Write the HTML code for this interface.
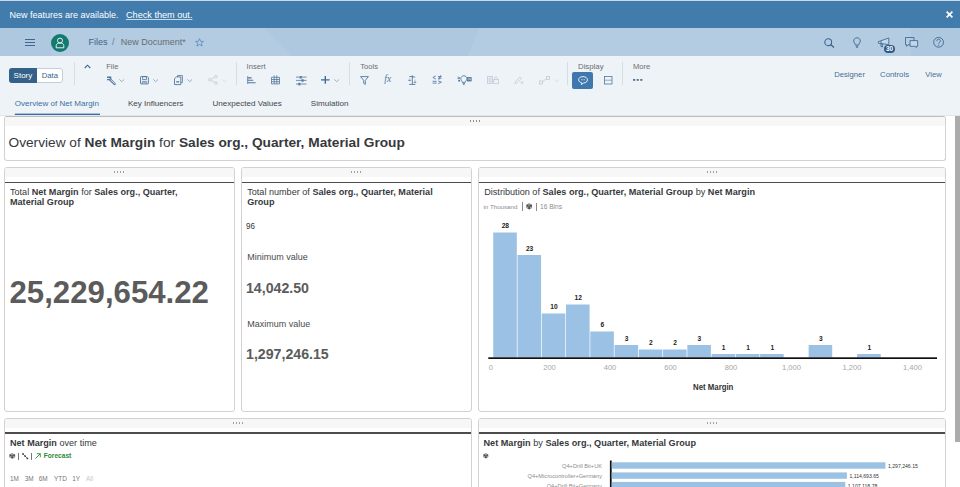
<!DOCTYPE html>
<html><head><meta charset="utf-8">
<style>
*{margin:0;padding:0;box-sizing:border-box}
html,body{width:960px;height:487px;overflow:hidden;background:#fff;font-family:"Liberation Sans",sans-serif;color:#32363a}
.a{position:absolute;white-space:nowrap;line-height:1}
svg.a{overflow:visible}
.card{position:absolute;background:#fff;border:1px solid #d2d2d2;border-radius:3px;overflow:hidden}
.hd{position:absolute;left:0;right:0;top:0;height:9px;background:#f7f7f7}
.ln{position:absolute;left:0;right:0;top:13.3px;height:1.5px;background:#4c4c4c}
.dt{position:absolute;top:2.8px;left:50%;margin-left:-5.5px;width:11px;height:2px;background-image:linear-gradient(90deg,#a0a0a0 1.4px,transparent 1.4px);background-size:3px 2px}
b{font-weight:bold}
</style></head><body>
<div class="a" style="left:0px;top:0px;width:960px;height:28px;background:#417cad;"></div>
<div class="a" style="left:0px;top:0px;width:960px;height:1px;background:#c9d9e7;"></div>
<div class="a" style="left:9.50px;top:10.68px;font-size:9px;color:#fff;font-weight:400;">New features are available.</div>
<div class="a" style="left:126.00px;top:10.55px;font-size:9.15px;color:#fff;font-weight:400;text-decoration:underline;text-decoration-color:rgba(255,255,255,0.7)">Check them out.</div>
<svg class="a" style="left:946px;top:11.2px" width="7" height="7" viewBox="0 0 7 7"><path d="M0.6 0.6L6.4 6.4M6.4 0.6L0.6 6.4" stroke="#fff" stroke-width="1.6"/></svg>
<div class="a" style="left:0px;top:28px;width:960px;height:28px;background:#b3cce2;"></div>
<div class="a" style="left:0px;top:28px;width:51px;height:28px;background:#aec8df;"></div>
<div class="a" style="left:911px;top:28px;width:49px;height:28px;background:#aec8df;"></div>
<svg class="a" style="left:0;top:28px" width="960" height="28"><path d="M263.8 0H479.5L467.6 28H292Z" fill="#aec8df"/></svg>
<div class="a" style="left:24.6px;top:38.5px;width:10.4px;height:1.3px;background:#3f6591;"></div>
<div class="a" style="left:24.6px;top:41.7px;width:10.4px;height:1.3px;background:#3f6591;"></div>
<div class="a" style="left:24.6px;top:44.9px;width:10.4px;height:1.3px;background:#3f6591;"></div>
<div class="a" style="left:51px;top:33.7px;width:18.3px;height:18.3px;border-radius:50%;background:#147a70"></div>
<svg class="a" style="left:55px;top:36px" width="10" height="13" viewBox="0 0 10 13"><circle cx="5" cy="4.6" r="2.5" fill="none" stroke="#e9f2f1" stroke-width="1"/><path d="M1.2 11.8V9.6C1.2 8 2.6 7 5 7S8.8 8 8.8 9.6V11.8Z" fill="none" stroke="#e9f2f1" stroke-width="1"/></svg>
<div class="a" style="left:88.50px;top:37.58px;font-size:9px;color:#40618a;font-weight:400;">Files</div>
<div class="a" style="left:112.00px;top:37.58px;font-size:9px;color:#6a7b8c;font-weight:400;">/</div>
<div class="a" style="left:120.80px;top:37.58px;font-size:9px;color:#676b70;font-weight:400;">New Document*</div>
<svg class="a" style="left:194.5px;top:38.2px" width="9" height="9" viewBox="0 0 9 9"><path d="M4.5 0.6L5.6 3.3L8.5 3.4L6.3 5.2L7.1 8.1L4.5 6.5L1.9 8.1L2.7 5.2L0.5 3.4L3.4 3.3Z" fill="none" stroke="#5b86b5" stroke-width="0.8"/></svg>
<svg class="a" style="left:824px;top:38px" width="11" height="10" viewBox="0 0 11 10"><circle cx="4.2" cy="4.2" r="3.4" fill="none" stroke="#3f6591" stroke-width="1.1"/><path d="M6.6 6.6L10 9.6" stroke="#3f6591" stroke-width="1.4"/></svg>
<svg class="a" style="left:853px;top:37px" width="8" height="11" viewBox="0 0 8 11"><path d="M4 0.8C1.9 0.8 0.7 2.3 0.7 4C0.7 5.6 2.2 6.6 2.5 8H5.5C5.8 6.6 7.3 5.6 7.3 4C7.3 2.3 6.1 0.8 4 0.8Z" fill="none" stroke="#3f6591" stroke-width="0.9"/><path d="M2.7 9.2H5.3M3.2 10.4H4.8" stroke="#3f6591" stroke-width="0.9"/></svg>
<svg class="a" style="left:877px;top:37px" width="13" height="11" viewBox="0 0 13 11"><path d="M1.4 4.6L11.8 1V7.6L1.4 6.2Z" fill="#c3d6e8" stroke="#3f6591" stroke-width="0.85" stroke-linejoin="round"/><path d="M4 4V9.6L5.6 9.8L5.2 6.8" fill="none" stroke="#3f6591" stroke-width="0.85"/></svg>
<div class="a" style="left:884.2px;top:44.7px;width:11.2px;height:8px;border-radius:4px;background:#2f5a85"></div>
<div class="a" style="left:885.90px;top:45.80px;font-size:6.5px;color:#fff;font-weight:700;">30</div>
<svg class="a" style="left:905px;top:37px" width="13" height="11" viewBox="0 0 13 11"><path d="M0.5 0.5H9V7.8H3L1.6 9.3V7.8H0.5Z" fill="none" stroke="#3f6591" stroke-width="0.85"/><path d="M5 3.6H12.6V9.3H11.4V10.5L10 9.3H5Z" fill="#c3d6e8" stroke="#3f6591" stroke-width="0.85"/></svg>
<svg class="a" style="left:933px;top:37px" width="12" height="11" viewBox="0 0 12 11"><circle cx="5.6" cy="5.3" r="4.9" fill="none" stroke="#3f6591" stroke-width="0.9"/><path d="M3.8 4C3.8 2.9 4.6 2.3 5.6 2.3C6.6 2.3 7.4 2.9 7.4 3.9C7.4 5.2 5.7 5.3 5.7 6.6" fill="none" stroke="#3f6591" stroke-width="0.9"/><circle cx="5.7" cy="8.2" r="0.6" fill="#3f6591"/></svg>
<div class="a" style="left:0px;top:56px;width:960px;height:60px;background:#eef3f8;"></div>
<div class="a" style="left:9px;top:67.5px;width:53.5px;height:15px;border:1px solid #c5ced8;border-radius:3px;background:#fff"></div>
<div class="a" style="left:9px;top:67.5px;width:27.8px;height:15px;border-radius:3px 0 0 3px;background:#33618a"></div>
<div class="a" style="left:13.60px;top:71.53px;font-size:8.0px;color:#fff;font-weight:400;">Story</div>
<div class="a" style="left:41.70px;top:71.78px;font-size:7.7px;color:#33618a;font-weight:400;">Data</div>
<div class="a" style="left:74.0px;top:62px;width:1px;height:22.5px;background:#d5dde5;"></div>
<div class="a" style="left:236.0px;top:62px;width:1px;height:22.5px;background:#d5dde5;"></div>
<div class="a" style="left:349.0px;top:62px;width:1px;height:22.5px;background:#d5dde5;"></div>
<div class="a" style="left:567.0px;top:62px;width:1px;height:22.5px;background:#d5dde5;"></div>
<div class="a" style="left:622.0px;top:62px;width:1px;height:22.5px;background:#d5dde5;"></div>
<svg class="a" style="left:83.5px;top:63.5px" width="7" height="5" viewBox="0 0 7 5"><path d="M0.7 4L3.5 1.2L6.3 4" fill="none" stroke="#3d6998" stroke-width="1.1"/></svg>
<div class="a" style="left:106.20px;top:63.17px;font-size:7.6px;color:#6a6d70;font-weight:400;">File</div>
<div class="a" style="left:246.60px;top:63.17px;font-size:7.6px;color:#6a6d70;font-weight:400;">Insert</div>
<div class="a" style="left:360.30px;top:63.17px;font-size:7.6px;color:#6a6d70;font-weight:400;">Tools</div>
<div class="a" style="left:578.00px;top:63.00px;font-size:7.8px;color:#6a6d70;font-weight:400;">Display</div>
<div class="a" style="left:632.90px;top:63.17px;font-size:7.6px;color:#6a6d70;font-weight:400;">More</div>
<svg class="a" style="left:104px;top:73px" width="16" height="14" viewBox="0 0 16 14"><path d="M3 4.2H6.6V6.6H3" fill="none" stroke="#52769d" stroke-width="1.4"/><path d="M6.2 6.6L10.6 11" stroke="#52769d" stroke-width="2.4" stroke-linecap="round"/><path d="M6.6 6.8L10.4 10.6" stroke="#eef3f8" stroke-width="0.9" stroke-linecap="round"/></svg>
<svg class="a" style="left:119.3px;top:78.5px" width="5.5" height="3.2" viewBox="0 0 5.5 3.2"><path d="M0.4 0.4L2.75 2.7L5.1 0.4" fill="none" stroke="#8ea4ba" stroke-width="0.9"/></svg>
<svg class="a" style="left:140px;top:75.6px" width="9" height="8.4" viewBox="0 0 9 8.4"><path d="M1.2 0.5H7.2L8.4 1.7V7.4Q8.4 7.9 7.9 7.9H1Q0.5 7.9 0.5 7.4V1.2Q0.5 0.5 1.2 0.5Z" fill="none" stroke="#52769d" stroke-width="0.9"/><rect x="2.6" y="0.8" width="4" height="2.6" fill="none" stroke="#52769d" stroke-width="0.8"/><path d="M2.3 7.8V5.4H6.6V7.8M3.3 6.6H5.6" fill="none" stroke="#52769d" stroke-width="0.7"/></svg>
<svg class="a" style="left:153px;top:78.5px" width="5.5" height="3.2" viewBox="0 0 5.5 3.2"><path d="M0.4 0.4L2.75 2.7L5.1 0.4" fill="none" stroke="#8ea4ba" stroke-width="0.9"/></svg>
<svg class="a" style="left:174px;top:75px" width="9" height="10" viewBox="0 0 9 10"><path d="M3.6 1.9V0.5H8.4V7.6H6.9" fill="none" stroke="#52769d" stroke-width="0.8"/><path d="M0.5 3.6L2.4 1.9H6.8V9.6H0.5Z" fill="none" stroke="#52769d" stroke-width="0.9"/><rect x="2.2" y="6.2" width="3" height="1.3" fill="#52769d"/></svg>
<svg class="a" style="left:187px;top:78.5px" width="5.5" height="3.2" viewBox="0 0 5.5 3.2"><path d="M0.4 0.4L2.75 2.7L5.1 0.4" fill="none" stroke="#8ea4ba" stroke-width="0.9"/></svg>
<svg class="a" style="left:208px;top:75.3px" width="10" height="10" viewBox="0 0 10 10"><circle cx="1.8" cy="4.8" r="1.3" fill="none" stroke="#c4d0dc" stroke-width="0.9"/><circle cx="8" cy="1.6" r="1.3" fill="none" stroke="#c4d0dc" stroke-width="0.9"/><circle cx="8" cy="8" r="1.3" fill="none" stroke="#c4d0dc" stroke-width="0.9"/><path d="M3 4.2L6.8 2.2M3 5.4L6.8 7.4" stroke="#c4d0dc" stroke-width="0.9"/></svg>
<svg class="a" style="left:222.4px;top:78.5px" width="5.5" height="3.2" viewBox="0 0 5.5 3.2"><path d="M0.4 0.4L2.75 2.7L5.1 0.4" fill="none" stroke="#d5dde5" stroke-width="0.9"/></svg>
<svg class="a" style="left:246.5px;top:75.8px" width="9" height="8.2" viewBox="0 0 9 8.2"><path d="M0.7 0.2V7.9" stroke="#52769d" stroke-width="0.9"/><path d="M1 1.9H4.6M1 4.3H6.2M1 6.7H8.6" stroke="#52769d" stroke-width="1.1"/></svg>
<svg class="a" style="left:271px;top:75.3px" width="9" height="9.4" viewBox="0 0 9 9.4"><path d="M0.5 2.3H8.5V8.9H0.5Z M0.5 4.5H8.5M0.5 6.7H8.5M3.2 0.4V8.9M5.8 0.4V8.9" fill="none" stroke="#52769d" stroke-width="0.8"/></svg>
<svg class="a" style="left:295.5px;top:75.5px" width="10.5" height="9.5" viewBox="0 0 10.5 9.5"><path d="M0 1.1H10.5M0 4.4H10.5M0 8H10.5" stroke="#52769d" stroke-width="0.8"/><rect x="3.8" y="0" width="1.9" height="2.6" fill="#52769d"/><rect x="5.6" y="3.2" width="1.9" height="2.6" fill="#52769d"/><rect x="2.4" y="6.8" width="1.9" height="2.6" fill="#52769d"/></svg>
<svg class="a" style="left:321.1px;top:76px" width="8.6" height="7.8" viewBox="0 0 8.6 7.8"><path d="M4.3 0V7.8M0 3.9H8.6" stroke="#3d6998" stroke-width="1.35"/></svg>
<svg class="a" style="left:334.1px;top:78.5px" width="5.5" height="3.2" viewBox="0 0 5.5 3.2"><path d="M0.4 0.4L2.75 2.7L5.1 0.4" fill="none" stroke="#8ea4ba" stroke-width="0.9"/></svg>
<svg class="a" style="left:360px;top:75.6px" width="9" height="9" viewBox="0 0 9 9"><path d="M0.6 0.6H8.4L5.3 4.4V8.4L3.7 7.3V4.4Z" fill="none" stroke="#52769d" stroke-width="0.9"/></svg>
<div class="a" style="left:384.30px;top:75.26px;font-size:9.5px;color:#52769d;font-weight:400;font-family:'Liberation Serif',serif"><i>fx</i></div>
<svg class="a" style="left:408px;top:75px" width="9" height="10" viewBox="0 0 9 10"><path d="M4.3 0.3V9.4M1.2 9.4H7.4M1.4 1.4L7.2 2.1" stroke="#52769d" stroke-width="0.9"/><path d="M0.3 5.4L1.6 1.6L2.9 5.4Z M5.7 7.3L7 3.2L8.3 7.3Z" fill="#c9d6e3" stroke="none"/><path d="M0.4 5.4H2.8M5.8 7.3H8.2" stroke="#52769d" stroke-width="0.9"/></svg>
<svg class="a" style="left:432px;top:75.3px" width="10.5" height="9" viewBox="0 0 10.5 9"><path d="M3.8 0.9L0.9 2.5L3.8 4.1M0.6 6.3H4.6M0.6 8.1H4.6M6 1.6H9.6M6 3.2H9.6M8.8 0.2L6.8 4.8M6.2 5.9L9.4 7.2L6.2 8.6" fill="none" stroke="#52769d" stroke-width="0.85"/></svg>
<svg class="a" style="left:457.3px;top:75px" width="15" height="10" viewBox="0 0 15 10"><path d="M6.8 0.8C5 0.8 3.8 2.1 3.8 3.7C3.8 5.2 5.2 6 5.4 7.4H8.2C8.4 6 9.8 5.2 9.8 3.7C9.8 2.1 8.6 0.8 6.8 0.8Z" fill="none" stroke="#52769d" stroke-width="0.9"/><path d="M5.6 8.6H8M6 9.6H7.6" stroke="#52769d" stroke-width="0.8"/><path d="M0.4 3.6H3M0.6 2L3 2.8" stroke="#52769d" stroke-width="0.8"/><rect x="10" y="2" width="4.6" height="4.4" fill="#52769d"/><path d="M10.6 3.2H14M10.6 4.6H14" stroke="#eef3f8" stroke-width="0.5"/><circle cx="2.2" cy="5.8" r="1" fill="#52769d"/></svg>
<svg class="a" style="left:487px;top:76px" width="12" height="8" viewBox="0 0 12 8"><rect x="0.5" y="0.5" width="5" height="7" fill="none" stroke="#c4d0dc" stroke-width="0.9"/><path d="M0.5 3H5.5M0.5 5.2H5.5M3 0.5V7.5" stroke="#c4d0dc" stroke-width="0.8"/><rect x="6.6" y="3.6" width="4.8" height="4" fill="none" stroke="#c4d0dc" stroke-width="0.9"/><path d="M7.6 3.6V2.2C7.6 0.6 10.4 0.6 10.4 2.2V3.6" fill="none" stroke="#c4d0dc" stroke-width="0.9"/></svg>
<svg class="a" style="left:514px;top:76px" width="10" height="8.5" viewBox="0 0 10 8.5"><path d="M0.8 7.6L1.2 5.8L6 1L7.4 2.4L2.6 7.2Z" fill="none" stroke="#c4d0dc" stroke-width="0.9"/><path d="M6.6 5.2L9.4 8M9.4 5.2L6.6 8" stroke="#c4d0dc" stroke-width="0.9"/></svg>
<svg class="a" style="left:539px;top:76.3px" width="11" height="8.5" viewBox="0 0 11 8.5"><rect x="0.5" y="5" width="3" height="3" fill="none" stroke="#c4d0dc" stroke-width="0.9"/><rect x="7.5" y="0.5" width="3" height="3" fill="none" stroke="#c4d0dc" stroke-width="0.9"/><path d="M3.5 5.8L7.5 2.5" stroke="#c4d0dc" stroke-width="0.9"/></svg>
<svg class="a" style="left:554.4px;top:78.5px" width="5.5" height="3.2" viewBox="0 0 5.5 3.2"><path d="M0.4 0.4L2.75 2.7L5.1 0.4" fill="none" stroke="#d5dde5" stroke-width="0.9"/></svg>
<div class="a" style="left:572.3px;top:71.5px;width:21.2px;height:17.2px;border-radius:2px;background:#3f78ad"></div>
<svg class="a" style="left:578px;top:75.5px" width="10" height="9.2" viewBox="0 0 10 9.2"><path d="M5 0.6C2.5 0.6 0.6 2 0.6 3.8C0.6 5.3 2 6.5 3.8 6.9L3.4 8.6L5.6 7C8 7 9.4 5.6 9.4 3.8C9.4 2 7.5 0.6 5 0.6Z" fill="none" stroke="#fff" stroke-width="0.9"/><path d="M3.2 3.8H6.8" stroke="#fff" stroke-width="0.8" stroke-dasharray="0.9 0.5"/></svg>
<svg class="a" style="left:603.7px;top:76px" width="8.5" height="8.5" viewBox="0 0 8.5 8.5"><rect x="0.5" y="0.5" width="7.5" height="7.5" fill="none" stroke="#52769d" stroke-width="0.8"/><path d="M0.5 4.2H8" stroke="#52769d" stroke-width="0.6"/></svg>
<svg class="a" style="left:633px;top:79.2px" width="10" height="2" viewBox="0 0 10 2"><rect x="0" y="0" width="2.2" height="1.8" fill="#52769d"/><rect x="3.6" y="0" width="2.2" height="1.8" fill="#52769d"/><rect x="7.2" y="0" width="2.2" height="1.8" fill="#52769d"/></svg>
<div class="a" style="left:834.20px;top:71.08px;font-size:7.7px;color:#4a6d93;font-weight:400;">Designer</div>
<div class="a" style="left:880.00px;top:71.00px;font-size:7.8px;color:#4a6d93;font-weight:400;">Controls</div>
<div class="a" style="left:925.30px;top:71.17px;font-size:7.6px;color:#4a6d93;font-weight:400;">View</div>
<div class="a" style="left:14.80px;top:99.89px;font-size:8.05px;color:#3b6fa3;font-weight:400;">Overview of Net Margin</div>
<div class="a" style="left:127.90px;top:99.89px;font-size:8.05px;color:#43464a;font-weight:400;">Key Influencers</div>
<div class="a" style="left:212.50px;top:99.89px;font-size:8.05px;color:#43464a;font-weight:400;">Unexpected Values</div>
<div class="a" style="left:310.80px;top:99.89px;font-size:8.05px;color:#43464a;font-weight:400;">Simulation</div>
<svg class="a" style="left:0;top:0" width="960" height="487"><rect x="14.8" y="113.6" width="85.2" height="1.5" fill="#3b72aa"/></svg>
<div class="a" style="left:0px;top:115px;width:960px;height:1px;background:#e1e6eb;"></div>
<div class="card" style="left:4px;top:116px;width:942px;height:45px;border-top:1.4px solid #bdbdbd"><div class="hd" style="height:8.7px"><div class="dt" style="top:2.6px;background-image:linear-gradient(90deg,#8f8f8f 1.4px,transparent 1.4px)"></div></div></div>
<div class="card" style="left:4px;top:167.3px;width:231px;height:244.4px"><div class="hd"><div class="dt"></div></div><div class="ln"></div></div>
<div class="card" style="left:241px;top:167.3px;width:231px;height:244.4px"><div class="hd"><div class="dt"></div></div><div class="ln"></div></div>
<div class="card" style="left:478px;top:167.3px;width:468px;height:244.4px"><div class="hd"><div class="dt"></div></div><div class="ln"></div></div>
<div class="card" style="left:4px;top:418px;width:468px;height:80px"><div class="hd"><div class="dt"></div></div><div class="ln"></div></div>
<div class="card" style="left:478px;top:418px;width:468px;height:80px"><div class="hd"><div class="dt"></div></div><div class="ln"></div></div>
<div class="a" style="left:8.50px;top:136.00px;font-size:13.7px;color:#36393c;font-weight:400;">Overview of <b>Net Margin</b> for <b>Sales org., Quarter, Material Group</b></div>
<div class="a" style="left:10.00px;top:187.51px;font-size:9.08px;color:#36393c;font-weight:400;">Total <b>Net Margin</b> for <b>Sales org., Quarter,</b></div>
<div class="a" style="left:10.00px;top:197.91px;font-size:9.08px;color:#36393c;font-weight:400;"><b>Material Group</b></div>
<div class="a" style="left:9.50px;top:276.59px;font-size:31.2px;color:#5b5b5b;font-weight:700;">25,229,654.22</div>
<div class="a" style="left:247.20px;top:187.50px;font-size:9.1px;color:#36393c;font-weight:400;">Total number of <b>Sales org., Quarter, Material</b></div>
<div class="a" style="left:247.20px;top:197.90px;font-size:9.1px;color:#36393c;font-weight:400;"><b>Group</b></div>
<div class="a" style="left:245.80px;top:221.62px;font-size:8.6px;color:#333;font-weight:400;transform:scaleX(0.93);transform-origin:0 0">96</div>
<div class="a" style="left:247.20px;top:253.38px;font-size:9px;color:#4a4a4a;font-weight:400;">Minimum value</div>
<div class="a" style="left:246.00px;top:280.61px;font-size:14.16px;color:#5b5b5b;font-weight:700;">14,042.50</div>
<div class="a" style="left:247.20px;top:320.28px;font-size:9px;color:#4a4a4a;font-weight:400;">Maximum value</div>
<div class="a" style="left:246.00px;top:347.30px;font-size:14.18px;color:#5b5b5b;font-weight:700;">1,297,246.15</div>
<div class="a" style="left:484.20px;top:188.47px;font-size:9.13px;color:#36393c;font-weight:400;">Distribution of <b>Sales org., Quarter, Material Group</b> by <b>Net Margin</b></div>
<div class="a" style="left:483.50px;top:204.25px;font-size:6.2px;color:#8c8c8c;font-weight:400;">in Thousand</div>
<div class="a" style="left:522px;top:202.3px;width:0.8px;height:8.3px;background:#8a8a8a;"></div>
<svg class="a" style="left:526px;top:203px" width="6.4" height="6.8" viewBox="0 0 6.4 6.8"><g transform="scale(0.914,0.971)"><path d="M3.5 0.2L6.6 1.9V5.1L3.5 6.8L0.4 5.1V1.9Z" fill="#505050"/><path d="M3.5 3.5L3.5 0.2M3.5 3.5L6.6 5.1M3.5 3.5L0.4 5.1M1.6 1.4L3.5 2.3L5.4 1.4M0.9 3.9L1.9 4.6L1.9 6M6.1 3.9L5.1 4.6L5.1 6" stroke="#fff" stroke-width="0.45" fill="none"/><circle cx="3.5" cy="3.5" r="0.8" fill="#505050"/></g></svg>
<div class="a" style="left:536px;top:203.2px;width:0.8px;height:7.6px;background:#8a8a8a;"></div>
<div class="a" style="left:540.00px;top:203.91px;font-size:6.6px;color:#8c8c8c;font-weight:400;">16 Bins</div>
<div class="a" style="left:493.25px;width:24.26px;top:223.30px;font-size:6.6px;font-weight:700;color:#222;text-align:center">28</div>
<div class="a" style="left:517.51px;width:24.26px;top:245.80px;font-size:6.6px;font-weight:700;color:#222;text-align:center">23</div>
<div class="a" style="left:541.77px;width:24.26px;top:304.30px;font-size:6.6px;font-weight:700;color:#222;text-align:center">10</div>
<div class="a" style="left:566.03px;width:24.26px;top:295.30px;font-size:6.6px;font-weight:700;color:#222;text-align:center">12</div>
<div class="a" style="left:590.29px;width:24.26px;top:322.30px;font-size:6.6px;font-weight:700;color:#222;text-align:center">6</div>
<div class="a" style="left:614.55px;width:24.26px;top:335.80px;font-size:6.6px;font-weight:700;color:#222;text-align:center">3</div>
<div class="a" style="left:638.81px;width:24.26px;top:340.30px;font-size:6.6px;font-weight:700;color:#222;text-align:center">2</div>
<div class="a" style="left:663.07px;width:24.26px;top:340.30px;font-size:6.6px;font-weight:700;color:#222;text-align:center">2</div>
<div class="a" style="left:687.33px;width:24.26px;top:335.80px;font-size:6.6px;font-weight:700;color:#222;text-align:center">3</div>
<div class="a" style="left:711.59px;width:24.26px;top:344.80px;font-size:6.6px;font-weight:700;color:#222;text-align:center">1</div>
<div class="a" style="left:735.85px;width:24.26px;top:344.80px;font-size:6.6px;font-weight:700;color:#222;text-align:center">1</div>
<div class="a" style="left:760.11px;width:24.26px;top:344.80px;font-size:6.6px;font-weight:700;color:#222;text-align:center">1</div>
<div class="a" style="left:808.64px;width:24.26px;top:335.80px;font-size:6.6px;font-weight:700;color:#222;text-align:center">3</div>
<div class="a" style="left:857.16px;width:24.26px;top:344.80px;font-size:6.6px;font-weight:700;color:#222;text-align:center">1</div>
<svg class="a" style="left:0;top:0" width="960" height="487"><rect x="493.25" y="232.50" width="23.56" height="125.00" fill="#9bc1e4"/><rect x="517.51" y="255.00" width="23.56" height="102.50" fill="#9bc1e4"/><rect x="541.77" y="313.50" width="23.56" height="44.00" fill="#9bc1e4"/><rect x="566.03" y="304.50" width="23.56" height="53.00" fill="#9bc1e4"/><rect x="590.29" y="331.50" width="23.56" height="26.00" fill="#9bc1e4"/><rect x="614.55" y="345.00" width="23.56" height="12.50" fill="#9bc1e4"/><rect x="638.81" y="349.50" width="23.56" height="8.00" fill="#9bc1e4"/><rect x="663.07" y="349.50" width="23.56" height="8.00" fill="#9bc1e4"/><rect x="687.33" y="345.00" width="23.56" height="12.50" fill="#9bc1e4"/><rect x="711.59" y="354.00" width="23.56" height="3.50" fill="#9bc1e4"/><rect x="735.85" y="354.00" width="23.56" height="3.50" fill="#9bc1e4"/><rect x="760.11" y="354.00" width="23.56" height="3.50" fill="#9bc1e4"/><rect x="808.64" y="345.00" width="23.56" height="12.50" fill="#9bc1e4"/><rect x="857.16" y="354.00" width="23.56" height="3.50" fill="#9bc1e4"/><rect x="488.3" y="357.3" width="448.7" height="1.7" fill="#111"/></svg>
<div class="a" style="left:470.80px;width:40px;top:363.77px;font-size:7.6px;color:#a6a6a6;text-align:center">0</div>
<div class="a" style="left:529.50px;width:40px;top:363.77px;font-size:7.6px;color:#a6a6a6;text-align:center">200</div>
<div class="a" style="left:590.00px;width:40px;top:363.77px;font-size:7.6px;color:#a6a6a6;text-align:center">400</div>
<div class="a" style="left:650.50px;width:40px;top:363.77px;font-size:7.6px;color:#a6a6a6;text-align:center">600</div>
<div class="a" style="left:711.00px;width:40px;top:363.77px;font-size:7.6px;color:#a6a6a6;text-align:center">800</div>
<div class="a" style="left:771.50px;width:40px;top:363.77px;font-size:7.6px;color:#a6a6a6;text-align:center">1,000</div>
<div class="a" style="left:832.00px;width:40px;top:363.77px;font-size:7.6px;color:#a6a6a6;text-align:center">1,200</div>
<div class="a" style="left:892.50px;width:40px;top:363.77px;font-size:7.6px;color:#a6a6a6;text-align:center">1,400</div>
<div class="a" style="left:692.50px;top:384.06px;font-size:8.2px;color:#333;font-weight:700;transform:scaleX(0.955);transform-origin:0 0">Net Margin</div>
<div class="a" style="left:10.00px;top:439.31px;font-size:9.09px;color:#36393c;font-weight:400;"><b>Net Margin</b> over time</div>
<svg class="a" style="left:8.5px;top:453px" width="6.5" height="5.9" viewBox="0 0 6.5 5.9"><g transform="scale(0.929,0.843)"><path d="M3.5 0.2L6.6 1.9V5.1L3.5 6.8L0.4 5.1V1.9Z" fill="#505050"/><path d="M3.5 3.5L3.5 0.2M3.5 3.5L6.6 5.1M3.5 3.5L0.4 5.1M1.6 1.4L3.5 2.3L5.4 1.4M0.9 3.9L1.9 4.6L1.9 6M6.1 3.9L5.1 4.6L5.1 6" stroke="#fff" stroke-width="0.45" fill="none"/><circle cx="3.5" cy="3.5" r="0.8" fill="#505050"/></g></svg>
<div class="a" style="left:18.3px;top:452.6px;width:0.8px;height:7px;background:#777;"></div>
<svg class="a" style="left:21.8px;top:452.8px" width="6.5" height="6.5" viewBox="0 0 6.5 6.5"><circle cx="1" cy="1" r="0.9" fill="#444"/><circle cx="3.2" cy="3.2" r="0.9" fill="#444"/><circle cx="5.4" cy="5.4" r="0.9" fill="#444"/><path d="M1 1L5.4 5.4" stroke="#444" stroke-width="0.7"/></svg>
<div class="a" style="left:31.2px;top:452.6px;width:0.8px;height:7px;background:#777;"></div>
<svg class="a" style="left:35px;top:453px" width="6" height="6" viewBox="0 0 6 6"><path d="M0.5 5.5L5.3 0.7M1.8 0.7H5.3V4.2" fill="none" stroke="#2e8a3a" stroke-width="0.9"/></svg>
<div class="a" style="left:43.80px;top:453.01px;font-size:6.6px;color:#2e8a3a;font-weight:700;">Forecast</div>
<div class="a" style="left:10.00px;top:475.74px;font-size:6.45px;color:#777;font-weight:400;">1M</div>
<div class="a" style="left:24.75px;top:475.74px;font-size:6.45px;color:#777;font-weight:400;">3M</div>
<div class="a" style="left:38.75px;top:475.74px;font-size:6.45px;color:#777;font-weight:400;">6M</div>
<div class="a" style="left:54.00px;top:475.74px;font-size:6.45px;color:#777;font-weight:400;">YTD</div>
<div class="a" style="left:72.25px;top:475.74px;font-size:6.45px;color:#777;font-weight:400;">1Y</div>
<div class="a" style="left:86.00px;top:475.74px;font-size:6.45px;color:#c8c8c8;font-weight:400;">All</div>
<div class="a" style="left:483.50px;top:438.57px;font-size:9.13px;color:#36393c;font-weight:400;"><b>Net Margin</b> by <b>Sales org., Quarter, Material Group</b></div>
<svg class="a" style="left:483px;top:453.2px" width="5.6" height="5.6" viewBox="0 0 5.6 5.6"><g transform="scale(0.800,0.800)"><path d="M3.5 0.2L6.6 1.9V5.1L3.5 6.8L0.4 5.1V1.9Z" fill="#505050"/><path d="M3.5 3.5L3.5 0.2M3.5 3.5L6.6 5.1M3.5 3.5L0.4 5.1M1.6 1.4L3.5 2.3L5.4 1.4M0.9 3.9L1.9 4.6L1.9 6M6.1 3.9L5.1 4.6L5.1 6" stroke="#fff" stroke-width="0.45" fill="none"/><circle cx="3.5" cy="3.5" r="0.8" fill="#505050"/></g></svg>
<div class="a" style="left:500px;width:102px;top:463.10px;font-size:5.66px;color:#8c8c8c;text-align:right;line-height:7px">Q4+Drill Bit+UK</div>
<div class="a" style="left:887.92px;top:462.90px;font-size:5.14px;color:#333;line-height:7px">1,297,246.15</div>
<div class="a" style="left:500px;width:102px;top:473.20px;font-size:5.66px;color:#8c8c8c;text-align:right;line-height:7px">Q4+Microcontroller+Germany</div>
<div class="a" style="left:849.40px;top:473.00px;font-size:5.14px;color:#333;line-height:7px">1,114,693.65</div>
<div class="a" style="left:500px;width:102px;top:482.70px;font-size:5.66px;color:#8c8c8c;text-align:right;line-height:7px">Q4+Drill Bit+Germany</div>
<div class="a" style="left:847.80px;top:482.50px;font-size:5.14px;color:#333;line-height:7px">1,107,118.78</div>
<svg class="a" style="left:0;top:0" width="960" height="487"><rect x="609.9" y="460.5" width="1.8" height="30" fill="#111"/><rect x="611.7" y="462.3" width="273.72" height="6.4" fill="#9bc1e4"/><rect x="611.7" y="472.4" width="235.20" height="6.4" fill="#9bc1e4"/><rect x="611.7" y="481.9" width="233.60" height="6.4" fill="#9bc1e4"/></svg>
<div class="a" style="left:955px;top:116px;width:5px;height:326px;background:#acacac;"></div>
</body></html>
